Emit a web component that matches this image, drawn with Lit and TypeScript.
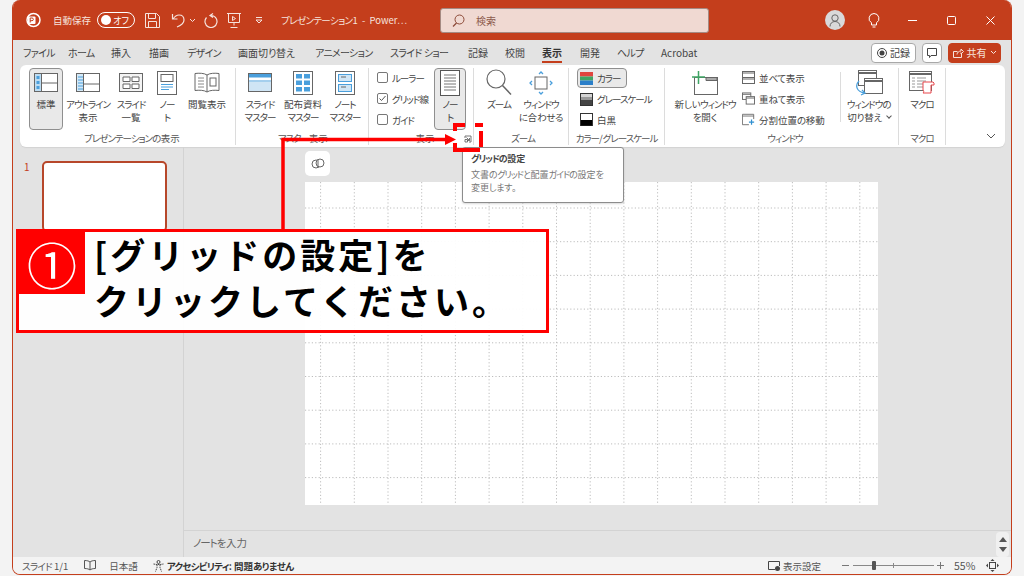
import { LitElement, html, css, svg } from "lit";
import { customElement } from "lit/decorators.js";

const G = "#666";
const B = "#4a9fdc";

// ribbon icons, drawn at their real pixel size
const ic = {
  normal: svg`<svg width="24" height="20" viewBox="0 0 24 20"><rect x=".5" y=".5" width="23" height="18" fill="#fff" stroke="${G}"/><rect x="1" y="1" width="6" height="17" fill="#bcdcf2"/><path d="M7.5 1v17M7.5 10h16" stroke="${G}" fill="none"/><path d="M2.5 3h3v3h-3zM2.5 8h3v3h-3zM2.5 13h3v3h-3z" fill="${B}"/></svg>`,
  outline: svg`<svg width="24" height="20" viewBox="0 0 24 20"><rect x=".5" y=".5" width="23" height="18" fill="#fff" stroke="${G}"/><rect x="1" y="1" width="6" height="17" fill="#d4e9f7"/><path d="M2 4h5M2 7h5M2 10h5M2 13h5M2 16h5" stroke="${B}"/><path d="M7.5 1v17M7.5 11h16" stroke="${G}" fill="none"/></svg>`,
  sorter: svg`<svg width="24" height="20" viewBox="0 0 24 20"><rect x=".5" y=".5" width="23" height="18" fill="#f4f4f4" stroke="${G}"/><path d="M4 4h7v4.5H4zM13 4h7v4.5h-7zM4 11h7v4.5H4zM13 11h7v4.5h-7z" fill="#fff" stroke="${G}"/></svg>`,
  note: svg`<svg width="20" height="24" viewBox="0 0 20 24"><rect x=".5" y=".5" width="19" height="23" fill="#fff" stroke="${G}"/><rect x="4" y="3.5" width="12" height="7" fill="#fff" stroke="${G}"/><path d="M4 13.5h12M4 16h12M4 18.500h8" stroke="${B}" stroke-width="1.200"/></svg>`,
  reading: svg`<svg width="26" height="22" viewBox="0 0 26 22"><path d="M13 3C10 1 5 1 1 1.500v17c4-.5 9-.5 12 1.500 3-2 8-2 12-1.500v-17C21 1 16 1 13 3zM13 3v17" fill="#fff" stroke="${G}"/><path d="M4 6h6M4 9h6M4 12h6M4 15h6" stroke="#888"/><rect x="16" y="6" width="6" height="8" fill="none" stroke="${G}"/></svg>`,
  sMaster: svg`<svg width="24" height="20" viewBox="0 0 24 20"><rect x=".5" y=".5" width="23" height="18" fill="#fff" stroke="${G}"/><rect x="1" y="1" width="22" height="3.500" fill="${B}"/><rect x="1" y="9" width="22" height="9" fill="#cfe5f5"/><path d="M1 8h22" stroke="${B}"/></svg>`,
  hMaster: svg`<svg width="20" height="24" viewBox="0 0 20 24"><rect x=".5" y=".5" width="19" height="23" fill="#fff" stroke="${G}"/><path d="M3 3h6v4.500H3zM11 3h6v4.500h-6zM3 9.500h6V14H3zM11 9.500h6V14h-6zM3 16h6v4.500H3zM11 16h6v4.500h-6z" fill="${B}"/></svg>`,
  nMaster: svg`<svg width="20" height="24" viewBox="0 0 20 24"><rect x=".5" y=".5" width="19" height="23" fill="#fff" stroke="${G}"/><rect x="3.500" y="3.500" width="13" height="7" fill="#cfe5f5" stroke="${B}"/><rect x="3.500" y="13.500" width="13" height="7" fill="#cfe5f5" stroke="${B}"/><path d="M6 6h5M6 16h5" stroke="${G}"/></svg>`,
  page: svg`<svg width="20" height="26" viewBox="0 0 20 26"><rect x=".5" y=".5" width="19" height="25" fill="#fff" stroke="#555"/><path d="M4 5h12M4 8h12M4 11h12M4 14h12M4 17h12M4 20h12" stroke="#777"/></svg>`,
  zoom: svg`<svg width="26" height="27" viewBox="0 0 26 27"><circle cx="10" cy="10" r="9" fill="#fff" stroke="#666" stroke-width="1.200"/><path d="M16.500 16.500L25 25.500" stroke="#666" stroke-width="1.500"/></svg>`,
  fit: svg`<svg width="24" height="24" viewBox="0 0 24 24"><rect x="6" y="6" width="12" height="12" fill="#fff" stroke="#666"/><path d="M10 3l2-2 2 2M10 21l2 2 2-2M3 10l-2 2 2 2M21 10l2 2-2 2" fill="none" stroke="${B}" stroke-width="1.300"/></svg>`,
  newWin: svg`<svg width="26" height="24" viewBox="0 0 26 24"><rect x="2.500" y="6.500" width="23" height="17" fill="#fff" stroke="${G}"/><path d="M14 6.500h11v3H14z" fill="#aaa" stroke="${G}"/><path d="M0 6h13M6.500 0v13" stroke="#3fa564" stroke-width="1.500"/></svg>`,
  switchWin: svg`<svg width="28" height="26" viewBox="0 0 28 26"><rect x="3.500" y=".5" width="18" height="15" fill="#fff" stroke="${G}"/><path d="M3.500 3h18" stroke="${G}" stroke-width="2"/><rect x="9.500" y="8.500" width="18" height="15" fill="#fff" stroke="${G}"/><path d="M9.500 11h18" stroke="${G}" stroke-width="2"/><path d="M4 11c-4 4-3 11 6 12M7 20l3 3-4 2" fill="none" stroke="${B}" stroke-width="1.300"/></svg>`,
  macro: svg`<svg width="26" height="24" viewBox="0 0 26 24"><rect x=".5" y=".5" width="22" height="19" fill="#fff" stroke="${G}"/><path d="M.5 3h22" stroke="${G}" stroke-width="2"/><path d="M3 7h3M8 7h9M3 10h3M8 10h9M3 13h3M8 13h6M3 16h3M8 16h6" stroke="#999"/><path d="M14 11h10l1 1v2h-3v8h-8c1-1 1-2 0-3z" fill="#fff" stroke="#e8474c"/></svg>`,
  tile: svg`<svg width="13" height="13" viewBox="0 0 13 13"><rect x=".5" y=".5" width="12" height="12" fill="#fff" stroke="${G}"/><path d="M.5 2h12M.5 6.500h12M.5 8h12" stroke="${G}"/></svg>`,
  cascade: svg`<svg width="13" height="13" viewBox="0 0 14 13"><rect x=".5" y=".5" width="9" height="7" fill="#fff" stroke="${G}"/><path d="M.5 2h9" stroke="${G}"/><rect x="4.500" y="4.500" width="9" height="8" fill="#fff" stroke="${G}"/><path d="M4.500 6h9" stroke="${G}"/></svg>`,
  split: svg`<svg width="13" height="13" viewBox="0 0 15 13"><path d="M8 12.500H.5V.5h13V6" fill="#fff" stroke="${G}"/><path d="M.5 2.500h13" stroke="${G}"/><path d="M8 9.500h6M11 6.500v6" stroke="#2f8fd0" stroke-width="1.400"/></svg>`,
  color: svg`<svg width="13" height="13" viewBox="0 0 13 13"><rect width="13" height="4.500" fill="#e0453e"/><rect y="4.500" width="13" height="4" fill="#3fa564"/><rect y="8.500" width="13" height="4.500" fill="#2b7fc9"/></svg>`,
  gray: svg`<svg width="13" height="13" viewBox="0 0 13 13"><rect x=".5" y=".5" width="12" height="12" fill="#444" stroke="#333"/><rect x="1" y="1" width="11" height="3" fill="#d4d4d4"/><rect x="1" y="4" width="11" height="3" fill="#999"/></svg>`,
  bw: svg`<svg width="13" height="13" viewBox="0 0 13 13"><rect x=".5" y=".5" width="12" height="12" fill="#fff" stroke="#333"/><rect x="1" y="7" width="11" height="5.500" fill="#000"/></svg>`,
};

// label and the slot each tab takes on the strip
const tabs: [string, number][] = [
  ["ファイル", 45], ["ホーム", 43], ["挿入", 38], ["描画", 38], ["デザイン", 51], ["画面切り替え", 77], ["アニメーション", 75],
  ["スライド ショー", 78], ["記録", 37], ["校閲", 37], ["表示", 38], ["開発", 37], ["ヘルプ", 44], ["Acrobat", 42],
];

// the reference's UI font has narrower kana than Noto, so tighten those runs
const k = (s: string) =>
  s.split(/([ァ-ヶー]+|[ぁ-ん]+)/).map((p, i) =>
    i % 2 ? html`<span class=${/[ぁ-ん]/.test(p) ? "hira" : "kata"}>${p}</span>` : p
  );

const big = (icon: unknown, lines: string[], w: string, on = false, caret = false) => html`
  <div class="big ${w} ${on ? "on" : ""}">
    <div class="big-ic">${icon}</div>
    ${lines.map((l, i) => html`<span>${k(l)}${caret && i == lines.length - 1 ? html`<i class="caret"></i>` : ""}</span>`)}
  </div>`;

const check = (label: string, checked = false) => html`
  <div class="small">
    <span class="box">${checked ? svg`<svg width="9" height="9" viewBox="0 0 9 9"><path d="M1.500 4.500l2 2 4-4.500" fill="none" stroke="#555"/></svg>` : ""}</span><span>${k(label)}</span>
  </div>`;

const row = (icon: unknown, label: string, on = false) => html`<div class="small ${on ? "picked" : ""}">${icon}<span>${k(label)}</span></div>`;

const xs = Array.from({ length: 17 }, (_, i) => 15.6 + i * 33.7);
const ys = Array.from({ length: 9 }, (_, i) => 26 + i * 33.7);

@customElement("app-root")
export class AppRoot extends LitElement {
  static styles = css`
    :host {
      display: block;
      position: relative;
      width: 1024px;
      height: 576px;
      overflow: hidden;
      background: #f3f3f3;
      font-family: "Noto Sans CJK JP", "Noto Sans", sans-serif;
      font-size: 10px;
      font-feature-settings: "palt";
      color: #444;
    }
    svg { display: block; flex: none; }
    .kata { letter-spacing: -1px; }
    .hira { letter-spacing: -.4px; }
    .window {
      display: flex;
      flex-direction: column;
      width: 1000px;
      height: 575px;
      margin-left: 12px;
      box-sizing: border-box;
      background: #e3e3e3;
      border: 1px solid #c43e1c;
      border-top: 0;
      border-radius: 8px;
      overflow: hidden;
    }

    /* title bar */
    .title {
      display: flex;
      align-items: center;
      flex: none;
      height: 40px;
      padding-left: 12px;
      background: #c43e1c;
      color: #f6e3dd;
    }
    .autosave { margin-left: 12px; font-size: 9.5px; width: 44px; white-space: nowrap; }
    .toggle {
      display: flex;
      align-items: center;
      justify-content: flex-end;
      position: relative;
      box-sizing: border-box;
      width: 38px;
      height: 16px;
      padding-right: 5px;
      border: 1px solid #fff;
      border-radius: 8px;
      font-size: 9px;
      color: #fff;
    }
    .knob { position: absolute; left: 3px; top: 2px; width: 10px; height: 10px; border-radius: 50%; background: #fff; }
    .qat { display: flex; align-items: center; margin-left: 10px; }
    .name { margin-left: 18px; width: 159px; font-size: 9.5px; white-space: nowrap; }
    .name .kata { letter-spacing: -.6px; }
    .search {
      display: flex;
      align-items: center;
      gap: 11px;
      box-sizing: border-box;
      width: 269px;
      height: 25px;
      padding-left: 11px;
      background: #f0d9d2;
      border: 1px solid #a58a82;
      border-radius: 3px;
      font-size: 10px;
      color: #8c5a4c;
    }
    .win { display: flex; align-items: center; margin-left: auto; padding-right: 16px; }
    .avatar { display: flex; align-items: center; justify-content: center; width: 20px; height: 20px; border-radius: 50%; background: #d9d9d9; }

    /* tabs */
    .tabs {
      display: flex;
      align-items: center;
      flex: none;
      height: 25px;
      padding-left: 10px;
      font-size: 10px;
      color: #444;
    }
    .tabs .kata { letter-spacing: -.7px; }
    .tab { flex: none; white-space: nowrap; }
    .tab span.lbl { position: relative; display: inline-block; }
    .tab.active { font-weight: 700; color: #333; }
    .tab.active span.lbl::after {
      content: "";
      position: absolute;
      left: 0;
      right: 0;
      bottom: -3px;
      height: 2px;
      background: #c43e1c;
    }
    .tab-actions { display: flex; align-items: center; gap: 6px; margin-left: auto; padding-right: 10px; }
    .act {
      display: flex;
      align-items: center;
      justify-content: center;
      gap: 3px;
      box-sizing: border-box;
      height: 20px;
      background: #fff;
      border: 1px solid #a8a8a8;
      border-radius: 4px;
      font-size: 10px;
    }
    .rec { width: 45px; }
    .cmt { width: 20px; }
    .share { width: 53px; background: #c43e1c; border-color: #c43e1c; color: #f6e3dd; }

    /* ribbon */
    .ribbon {
      display: flex;
      flex: none;
      position: relative;
      box-sizing: border-box;
      width: 985px;
      height: 82px;
      margin-left: 7px;
      background: #fff;
      border-radius: 6px;
      box-shadow: 0 1px 1px #d2d2d2;
    }
    .group {
      display: flex;
      flex-direction: column;
      box-sizing: border-box;
      margin-top: 3px;
      height: 77px;
      border-right: 1px solid #dcdcdc;
    }
    .g1 { width: 216px; padding-left: 9px; }
    .g2 { width: 133px; padding-left: 2px; }
    .g3 { width: 105px; padding-left: 8px; }
    .g4 { width: 95px; padding-left: 4px; }
    .g5 { width: 96px; padding-left: 11px; }
    .g6 { width: 234px; padding-left: 7px; }
    .g7 { width: 47px; }
    .items { display: flex; flex: 1; min-height: 0; }
    .glabel { height: 13px; line-height: 13px; text-align: center; font-size: 9.500px; color: #555; white-space: nowrap; }
    .g5 .glabel { margin-left: -11px; }
    .big {
      display: flex;
      flex-direction: column;
      align-items: center;
      box-sizing: border-box;
      height: 62px;
      border: 1px solid transparent;
      font-size: 9.500px;
      line-height: 13px;
      white-space: nowrap;
      color: #444;
    }
    .big.on { background: #e9e9e9; border-color: #8f8f8f; border-radius: 4px; }
    .big-ic { display: flex; align-items: center; justify-content: center; height: 27px; margin-bottom: 2px; flex: none; }
    .w32 { width: 32px; }
    .w34 { width: 34px; }
    .w30 { width: 30px; }
    .w42 { width: 42px; }
    .w44 { width: 44px; }
    .w50 { width: 50px; }
    .w56 { width: 56px; }
    .w66 { width: 66px; }
    .w47 { width: 47px; }
    .pad1 { margin-left: 3px; }
    .caret {
      display: inline-block;
      width: 3px;
      height: 3px;
      margin: 0 0 3px 5px;
      border-right: 1px solid #555;
      border-bottom: 1px solid #555;
      transform: rotate(45deg);
    }
    .stack { display: flex; flex-direction: column; justify-content: space-between; height: 55px; padding-top: 3px; white-space: nowrap; }
    .small { display: flex; align-items: center; gap: 4px; height: 13px; font-size: 9.500px; color: #444; }
    .box { display: flex; align-items: center; justify-content: center; box-sizing: border-box; width: 11px; height: 11px; border: 1px solid #777; border-radius: 2px; background: #fff; }
    .checks { width: 57px; }
    .picked { margin: -3px 0 -3px -3px; height: 20px; width: 50px; box-sizing: border-box; padding-left: 2px; background: #e9e9e9; border: 1px solid #8f8f8f; border-radius: 4px; }
    .winstack { width: 98px; margin-left: 4px; }
    .vsep { width: 1px; height: 50px; margin: 4px 0 0 0; background: #dcdcdc; }
    .collapse { position: absolute; right: 9px; bottom: 8px; }

    /* workspace */
    .work { display: flex; flex: 1; min-height: 0; }
    .thumbs {
      flex: none;
      display: flex;
      gap: 10px;
      box-sizing: border-box;
      width: 171px;
      padding: 14px 0 0 11px;
      border-right: 1px solid #d3d3d3;
      color: #c43e1c;
      font-size: 10px;
    }
    .thumbs span { width: 8px; line-height: 12px; }
    .thumb { box-sizing: border-box; width: 125px; height: 71px; background: #fff; border: 2px solid #b7472a; border-radius: 5px; }
    .main { display: flex; flex-direction: column; flex: 1; min-width: 0; }
    .canvas { flex: 1; box-sizing: border-box; padding: 4px 0 0 121px; }
    .copilot { display: flex; align-items: center; justify-content: center; width: 25px; height: 25px; margin-bottom: 6px; background: #fff; border-radius: 5px; }
    .slide { width: 573px; height: 323px; background: #fff; }
    .notes {
      display: flex;
      align-items: center;
      flex: none;
      box-sizing: border-box;
      height: 27px;
      padding-left: 9px;
      border-top: 1px solid #d3d3d3;
      font-size: 10.500px;
      color: #666;
    }
    .notes-text { margin-bottom: 3px; }
    .scroll {
      display: flex;
      flex-direction: column;
      align-items: center;
      justify-content: space-evenly;
      margin-left: auto;
      margin-right: 2px;
      width: 13px;
      height: 25px;
      background: #f0f0f0;
      border-radius: 4px;
    }

    /* status bar */
    .status {
      display: flex;
      align-items: center;
      flex: none;
      height: 17px;
      padding: 0 12px 0 9px;
      background: #f3f3f3;
      font-size: 9.500px;
      color: #555;
      white-space: nowrap;
    }
    .status .kata { letter-spacing: -.7px; }
    .status b { color: #333; margin-left: 3px; font-weight: 700; }
    .sright { display: flex; align-items: center; margin-left: auto; }
    .slider { position: relative; width: 81px; height: 1px; margin: 0 3px 0 4px; background: #888; }
    .thumbz { position: absolute; left: 19px; top: -4px; width: 4px; height: 9px; background: #555; border-radius: 1px; }
    .tick { position: absolute; left: 40px; top: -2px; width: 1px; height: 5px; background: #888; }

    /* overlays of the tutorial */
    .tooltip {
      position: absolute;
      left: 462px;
      top: 147px;
      box-sizing: border-box;
      width: 162px;
      height: 56px;
      padding: 4px 8px;
      background: #fff;
      border: 1px solid #8c8c8c;
      border-radius: 3px;
      font-size: 9px;
      line-height: 13px;
      color: #777;
      white-space: nowrap;
      box-shadow: 0 1px 2px rgba(0, 0, 0, .15);
    }
    .tooltip b { display: block; margin-bottom: 3px; color: #444; font-weight: 700; }
    .marks { position: absolute; left: 0; top: 0; }
    .callout {
      display: flex;
      position: absolute;
      left: 16px;
      top: 229px;
      box-sizing: border-box;
      width: 533px;
      height: 104px;
      background: rgba(255, 255, 255, .94);
      border: 3px solid #f00;
    }
    .num {
      flex: none;
      width: 66px;
      height: 62px;
      background: #f00;
      color: #fff;
      font-size: 50px;
      line-height: 62px;
      text-align: center;
    }
    .msg {
      margin: -1px 0 0 9px;
      color: #000;
      font-size: 35px;
      font-weight: 700;
      font-feature-settings: normal;
      line-height: 46px;
      letter-spacing: 3px;
      white-space: nowrap;
    }
  `;

  render() {
    return html`
      <div class="window">
        <div class="title">
          <svg width="16" height="16" viewBox="0 0 16 16"><circle cx="8.500" cy="8" r="6.500" fill="none" stroke="#fff" stroke-width="1.500"/><rect x="3" y="4.500" width="7.500" height="7.500" rx="1" fill="#fff"/><path d="M5.200 10.500v-4.500h1.800a1.300 1.300 0 0 1 0 2.700H5.200" fill="none" stroke="#c43e1c"/></svg>
          <span class="autosave">自動保存</span>
          <div class="toggle"><span class="knob"></span>オフ</div>
          <div class="qat">
            <svg width="15" height="15" viewBox="0 0 15 15"><path d="M.5.5h11l3 3v11H.5zM3.500.5v5h7v-5M3.500 14.500v-6h8v6" fill="none" stroke="#f6e3dd"/></svg>
            <svg style="margin-left:10px" width="16" height="15" viewBox="0 0 16 15"><path d="M2.500 1v5h5M3 6c2-3 4-4 6-4 3 0 5 2 5 5 0 2-2 5-7 7" fill="none" stroke="#f6e3dd" stroke-width="1.200"/></svg>
            <svg style="margin-left:3px" width="7" height="5" viewBox="0 0 7 5"><path d="M1 1l2.500 2.500L6 1" fill="none" stroke="#f6e3dd"/></svg>
            <svg style="margin-left:8px" width="15" height="16" viewBox="0 0 15 16"><path d="M9 1.500l-3 2 3 2M6.500 3.500a6 6 0 1 1-4 2" fill="none" stroke="#f6e3dd" stroke-width="1.200"/></svg>
            <svg style="margin-left:8px" width="14" height="15" viewBox="0 0 14 15"><path d="M0 .5h14M1.500.5v9h11v-9M7 9.500v3M3.500 14.500h7M5.500 3.500l3 2-3 2z" fill="none" stroke="#f6e3dd"/></svg>
            <svg style="margin-left:14px" width="8" height="7" viewBox="0 0 8 7"><path d="M1 .5h6M1 3l3 3 3-3z" fill="none" stroke="#f6e3dd"/></svg>
          </div>
          <span class="name">${k("プレゼンテーション")}1 &nbsp;-&nbsp; Power…</span>
          <div class="search">
            <svg width="13" height="13" viewBox="0 0 13 13"><circle cx="7.500" cy="5.500" r="4.500" fill="none" stroke="#8c4a38"/><path d="M4.500 9L1 12.500" stroke="#8c4a38" stroke-width="1.200"/></svg>
            <span>検索</span>
          </div>
          <div class="win">
            <div class="avatar"><svg width="12" height="13" viewBox="0 0 12 13"><circle cx="6" cy="4" r="3.200" fill="none" stroke="#666"/><path d="M1 12.500c0-3 2-5 5-5s5 2 5 5" fill="none" stroke="#666"/></svg></div>
            <svg style="margin-left:23px" width="12" height="15" viewBox="0 0 12 15"><path d="M6 .5a5 5 0 0 0-2.500 9.300V12h5V9.800A5 5 0 0 0 6 .5zM4.500 14h3" fill="none" stroke="#fff"/></svg>
            <svg style="margin-left:28px" width="9" height="3" viewBox="0 0 9 3"><path d="M0 1.500h9" stroke="#fff"/></svg>
            <svg style="margin-left:30px" width="9" height="9" viewBox="0 0 9 9"><rect x=".5" y=".5" width="8" height="8" rx="1" fill="none" stroke="#fff"/></svg>
            <svg style="margin-left:30px" width="9" height="9" viewBox="0 0 9 9"><path d="M.5.5l8 8M8.500.5l-8 8" stroke="#fff"/></svg>
          </div>
        </div>

        <div class="tabs">
          ${tabs.map(([t, w]) => html`<div class="tab ${t == "表示" ? "active" : ""}" style="width:${w}px"><span class="lbl">${k(t)}</span></div>`)}
          <div class="tab-actions">
            <div class="act rec"><svg width="10" height="10" viewBox="0 0 10 10"><circle cx="5" cy="5" r="4.500" fill="none" stroke="#444"/><circle cx="5" cy="5" r="2.500" fill="#444"/></svg>記録</div>
            <div class="act cmt"><svg width="10" height="10" viewBox="0 0 10 10"><path d="M.5.5h9v7H4L2.500 9.500v-2h-2z" fill="none" stroke="#444"/></svg></div>
            <div class="act share"><svg width="11" height="10" viewBox="0 0 11 10"><path d="M.5 3.500h4M.5 3.500v6h8v-4M4 6.500c0-2 2-3.500 4-3.500V1l2.500 2.500L8 6V4.500" fill="none" stroke="#f6e3dd"/></svg>共有<svg width="7" height="5" viewBox="0 0 7 5"><path d="M1 1l2.500 2.500L6 1" fill="none" stroke="#f6e3dd"/></svg></div>
          </div>
        </div>

        <div class="ribbon">
          <div class="group g1">
            <div class="items">
              ${big(ic.normal, ["標準"], "w34", true)}
              <div class="pad1"></div>
              ${big(ic.outline, ["アウトライン", "表示"], "w44")}
              ${big(ic.sorter, ["スライド", "一覧"], "w42")}
              ${big(ic.note, ["ノー", "ト"], "w30")}
              ${big(ic.reading, ["閲覧表示"], "w50")}
            </div>
            <div class="glabel">${k("プレゼンテーションの表示")}</div>
          </div>
          <div class="group g2">
            <div class="items">
              ${big(ic.sMaster, ["スライド", "マスター"], "w44")}
              ${big(ic.hMaster, ["配布資料", "マスター"], "w42")}
              ${big(ic.nMaster, ["ノート", "マスター"], "w42")}
            </div>
            <div class="glabel">${k("マスター表示")}</div>
          </div>
          <div class="group g3">
            <div class="items">
              <div class="stack checks">
                ${check("ルーラー")}
                ${check("グリッド線", true)}
                ${check("ガイド")}
              </div>
              ${big(ic.page, ["ノー", "ト"], "w32", true)}
            </div>
            <div class="glabel">表示</div>
          </div>
          <div class="group g4">
            <div class="items">
              ${big(ic.zoom, ["ズーム"], "w42")}
              ${big(ic.fit, ["ウィンドウ", "に合わせる"], "w42")}
            </div>
            <div class="glabel">${k("ズーム")}</div>
          </div>
          <div class="group g5">
            <div class="items">
              <div class="stack">
                ${row(ic.color, "カラー", true)}
                ${row(ic.gray, "グレースケール")}
                ${row(ic.bw, "白黒")}
              </div>
            </div>
            <div class="glabel">${k("カラー/グレースケール")}</div>
          </div>
          <div class="group g6">
            <div class="items">
              ${big(ic.newWin, ["新しいウィンドウ", "を開く"], "w66")}
              <div class="stack winstack">
                ${row(ic.tile, "並べて表示")}
                ${row(ic.cascade, "重ねて表示")}
                ${row(ic.split, "分割位置の移動")}
              </div>
              <div class="vsep"></div>
              ${big(ic.switchWin, ["ウィンドウの", "切り替え"], "w56", false, true)}
            </div>
            <div class="glabel">${k("ウィンドウ")}</div>
          </div>
          <div class="group g7">
            <div class="items">${big(ic.macro, ["マクロ"], "w47")}</div>
            <div class="glabel">${k("マクロ")}</div>
          </div>
          <svg class="collapse" width="10" height="6" viewBox="0 0 10 6"><path d="M1 1l4 4 4-4" fill="none" stroke="#555"/></svg>
        </div>

        <div class="work">
          <div class="thumbs"><span>1</span><div class="thumb"></div></div>
          <div class="main">
            <div class="canvas">
              <div class="copilot">
                <svg width="14" height="14" viewBox="0 0 14 14"><circle cx="5" cy="7" r="4" fill="none" stroke="#666"/><circle cx="9" cy="6" r="4" fill="#fff" stroke="#666"/><path d="M7 2.500v8" stroke="#666"/></svg>
              </div>
              <div class="slide">
                <svg width="573" height="323" viewBox="0 0 573 323">
                  ${xs.map((x) => svg`<line x1=${x} x2=${x} y1="0" y2="323" stroke="#bdbdbd" stroke-dasharray="1.200 2.200"/>`)}
                  ${ys.map((y) => svg`<line x1="0" x2="573" y1=${y} y2=${y} stroke="#bdbdbd" stroke-dasharray="1.200 2.200"/>`)}
                </svg>
              </div>
            </div>
            <div class="notes">
              <span class="notes-text">${k("ノートを入力")}</span>
              <div class="scroll">
                <svg width="8" height="5" viewBox="0 0 8 5"><path d="M4 0l4 5H0z" fill="#555"/></svg>
                <svg width="8" height="5" viewBox="0 0 8 5"><path d="M4 5L8 0H0z" fill="#555"/></svg>
              </div>
            </div>
          </div>
        </div>

        <div class="status">
          <span>${k("スライド")} 1/1</span>
          <svg style="margin-left:16px" width="12" height="11" viewBox="0 0 12 11"><path d="M6 2C5 1 3 .5.5.5v8C3 8.500 5 9 6 10c1-1 3-1.500 5.500-1.500v-8C9 .5 7 1 6 2zM6 2v8" fill="none" stroke="#555"/></svg>
          <span style="margin-left:13px">日本語</span>
          <svg style="margin-left:15px" width="11" height="12" viewBox="0 0 11 12"><circle cx="5.500" cy="2" r="1.500" fill="none" stroke="#444"/><path d="M.5 4l3.500.5h3l3.500-.5M4 4.500v3L2.500 11.500M7 4.500v3l1.500 4" fill="none" stroke="#444" stroke-dasharray="1.500 .7"/></svg>
          <b>${k("アクセシビリティ: 問題ありません")}</b>
          <div class="sright">
            <svg width="13" height="12" viewBox="0 0 13 12"><path d="M7 9.500H.5v-8h11V6" fill="none" stroke="#444"/><circle cx="9.500" cy="8.500" r="2.500" fill="#444"/></svg>
            <span style="margin-left:2px;width:59px">表示設定</span>
            <svg width="7" height="1" viewBox="0 0 7 1"><path d="M0 .5h7" stroke="#777"/></svg>
            <div class="slider"><span class="thumbz"></span><span class="tick"></span></div>
            <svg width="7" height="7" viewBox="0 0 7 7"><path d="M0 3.500h7M3.500 0v7" stroke="#777"/></svg>
            <span style="margin-left:10px;font-size:10.500px;width:32px">55%</span>
            <svg width="13" height="13" viewBox="0 0 13 13"><rect x="3.500" y="3.500" width="6" height="6" fill="none" stroke="#444"/><path d="M6.500 0l-2 2h4zM6.500 13l-2-2h4zM0 6.500l2-2v4zM13 6.500l-2-2v4z" fill="#444"/></svg>
          </div>
        </div>
      </div>

      <div class="tooltip">
        <b>${k("グリッドの設定")}</b>
        ${k("文書のグリッドと配置ガイドの設定を")}<br />${k("変更します。")}
      </div>

      <svg class="marks" width="1024" height="576" viewBox="0 0 1024 576">
        <path d="M283 232V139.500H447" fill="none" stroke="#f00" stroke-width="3.500"/>
        <path d="M445 134l11 5.500-11 5.500z" fill="#f00"/>
        <path d="M453 125H465M475 125H483M455 123V131M481 131V147M455 143V150H480" fill="none" stroke="#f00" stroke-width="4"/>
        <svg x="464" y="135" width="8" height="8" viewBox="0 0 8 8"><path d="M1 3V1h6v6H5M1 4.500h2.500V7H1zM2.500 2.500L5.500 5.500M5.500 3v2.500H3" fill="none" stroke="#666" stroke-width=".9"/></svg>
      </svg>

      <div class="callout">
        <div class="num">①</div>
        <div class="msg">[グリッドの設定]を<br />クリックしてください。</div>
      </div>
    `;
  }
}
